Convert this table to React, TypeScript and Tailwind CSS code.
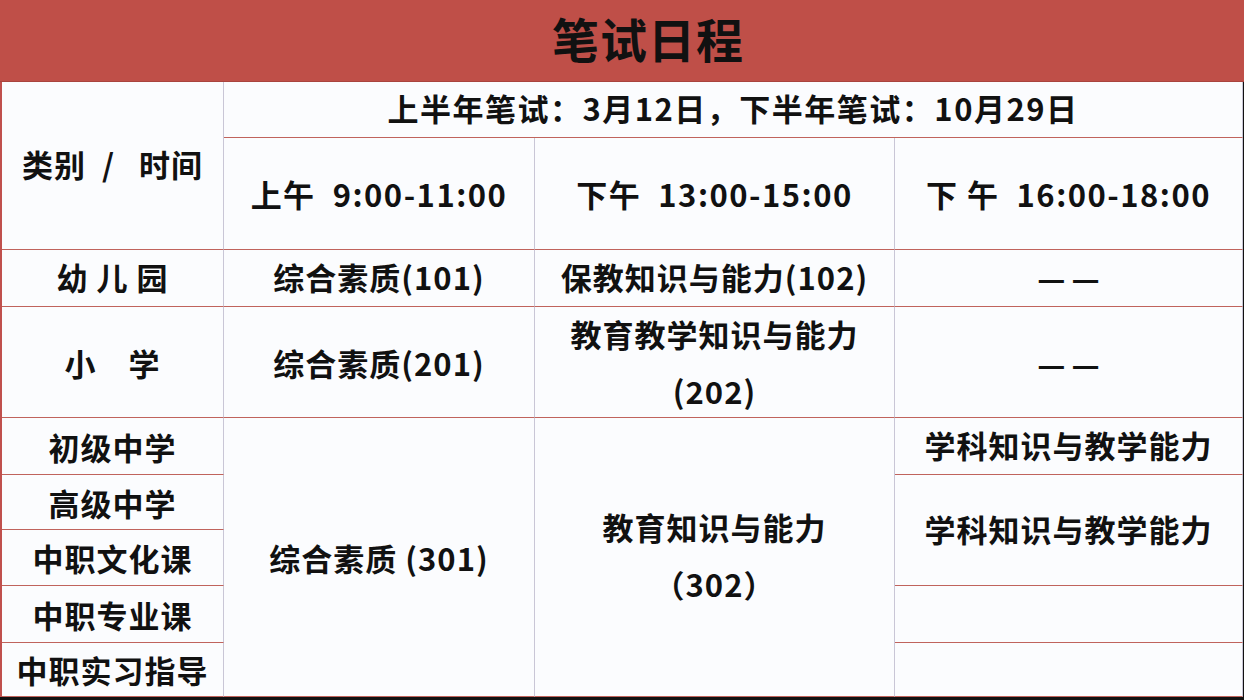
export default function App() {
  const cell =
    'flex flex-col items-center justify-center border-r border-b border-r-[#c9c6d6] border-b-[#c0635c] bg-[#fbfcfe] text-center leading-[57px]';
  const edge = 'border-r-[#8a3a48]';

  const Dashes = () => (
    <span className="flex gap-[6px] tracking-normal">
      <span>—</span>
      <span>—</span>
    </span>
  );

  return (
    <div
      className="w-[1244px] h-[700px] overflow-hidden bg-[#111] text-[#111]"
      style={{ fontFamily: '"Noto Sans CJK SC", "Noto Sans", sans-serif' }}
    >
      <div className="flex h-[82px] items-center justify-center border-b border-[#a9443e] bg-[#bf4f48] pb-1">
        <h1 className="pl-[52px] text-[47px] font-bold tracking-[1px]">笔试日程</h1>
      </div>
      <div className="grid h-[615px] w-[1243px] grid-cols-[222px_311px_360px_1fr] grid-rows-[56px_112px_57px_111px_57px_55px_56px_57px_54px] border-l-2 border-l-[#c0504d] text-[31px] font-bold tracking-[1px]">
        <div className={`${cell} row-span-2 pb-1`}>类别&nbsp;&nbsp;/&nbsp;&nbsp;&nbsp;时间</div>
        <div className={`${cell} col-span-3 pb-1 text-[31px] tracking-[1.5px]`}>
          上半年笔试：3月12日，下半年笔试：10月29日
        </div>
        <div className={`${cell} tracking-[1.5px]`}>上午&nbsp;&nbsp;9:00-11:00</div>
        <div className={`${cell} tracking-[1.5px]`}>下午&nbsp;&nbsp;13:00-15:00</div>
        <div className={`${cell} ${edge} tracking-[1.5px]`}>下&nbsp;午&nbsp;&nbsp;16:00-18:00</div>

        <div className={`${cell} pb-1`}>幼&nbsp;儿&nbsp;园</div>
        <div className={`${cell} pb-1`}>综合素质(101)</div>
        <div className={`${cell} pb-1`}>保教知识与能力(102)</div>
        <div className={`${cell} ${edge} pb-1`}>
          <Dashes />
        </div>

        <div className={cell}>小&nbsp;&nbsp;&nbsp;&nbsp;学</div>
        <div className={cell}>综合素质(201)</div>
        <div className={cell}>
          <span>教育教学知识与能力</span>
          <span>(202)</span>
        </div>
        <div className={`${cell} ${edge}`}>
          <Dashes />
        </div>

        <div className={`${cell} col-start-1 row-start-5`}>初级中学</div>
        <div className={`${cell} col-start-1 row-start-6`}>高级中学</div>
        <div className={`${cell} col-start-1 row-start-7`}>中职文化课</div>
        <div className={`${cell} col-start-1 row-start-8`}>中职专业课</div>
        <div className={`${cell} col-start-1 row-start-9`}>中职实习指导</div>

        <div className={`${cell} col-start-2 row-start-5 row-span-5`}>综合素质 (301)</div>
        <div className={`${cell} col-start-3 row-start-5 row-span-5 pb-1`}>
          <span>教育知识与能力</span>
          <span>（302）</span>
        </div>

        <div className={`${cell} ${edge} col-start-4 row-start-5 pb-1`}>学科知识与教学能力</div>
        <div className={`${cell} ${edge} col-start-4 row-start-6 row-span-2 pb-1`}>学科知识与教学能力</div>
        <div className={`${cell} ${edge} col-start-4 row-start-8`}></div>
        <div className={`${cell} ${edge} col-start-4 row-start-9`}></div>
      </div>
    </div>
  );
}
